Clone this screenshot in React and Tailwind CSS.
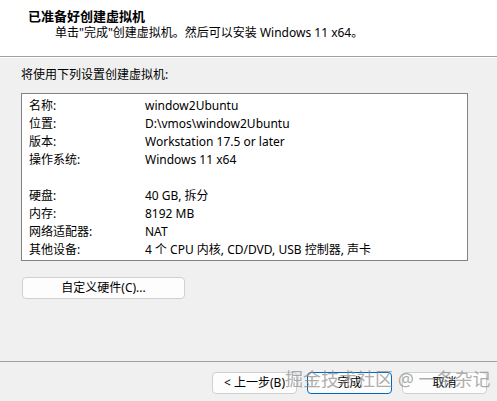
const rows = [
  { label: '名称:', value: 'window2Ubuntu' },
  { label: '位置:', value: 'D:\\vmos\\window2Ubuntu' },
  { label: '版本:', value: 'Workstation 17.5 or later' },
  { label: '操作系统:', value: 'Windows 11 x64' },
  null,
  { label: '硬盘:', value: '40 GB, 拆分' },
  { label: '内存:', value: '8192 MB' },
  { label: '网络适配器:', value: 'NAT' },
  { label: '其他设备:', value: '4 个 CPU 内核, CD/DVD, USB 控制器, 声卡' },
];

const font = { fontFamily: '"Noto Sans", "Noto Sans CJK SC", sans-serif' };

function Btn({ children, primary, className = '' }) {
  return (
    <button
      className={`h-[22px] rounded-[4px] bg-[#fdfdfd] text-[12px] leading-none text-black ${
        primary ? 'border border-[#0067c0]' : 'border border-[#d0d0d0]'
      } ${className}`}
    >
      {children}
    </button>
  );
}

export default function App() {
  return (
    <div className="relative flex h-[401px] w-[497px] flex-col overflow-hidden bg-[#f0f0f0] text-[12px] text-black" style={font}>
      {/* header */}
      <div className="h-[56px] shrink-0 bg-white pl-[28px] pt-[7px]">
        <div className="text-[13px] font-bold leading-[18px]">已准备好创建虚拟机</div>
        <div className="pl-[27px] text-[12px] leading-[16px]">单击"完成"创建虚拟机。然后可以安装 Windows 11 x64。</div>
      </div>
      <div className="h-px shrink-0 bg-[#a0a0a0]" />
      <div className="h-px shrink-0 bg-white" />

      <div className="flex-1 px-[21px] pt-[9px]">
        <div className="leading-[16px]">将使用下列设置创建虚拟机:</div>
        <div className="mt-[10px] h-[168px] w-[447px] border border-[#828282] bg-white pl-[7px] pt-[3px]">
          {rows.map((r, i) =>
            r ? (
              <div key={i} className="flex h-[18px] items-center">
                <span className="w-[116px]">{r.label}</span>
                <span>{r.value}</span>
              </div>
            ) : (
              <div key={i} className="h-[18px]" />
            )
          )}
        </div>
        <Btn className="mt-[16px] w-[163px] ml-px">自定义硬件(C)...</Btn>
      </div>

      {/* footer */}
      <div className="h-px shrink-0 bg-[#a0a0a0]" />
      <div className="flex h-[39px] shrink-0 items-start justify-end gap-[10px] pr-[10px] pt-[10px]">
        <Btn className="w-[85px]">&lt; 上一步(B)</Btn>
        <Btn primary className="w-[85px]">完成</Btn>
        <Btn className="w-[85px]">取消</Btn>
      </div>

      {/* watermark */}
      <div className="pointer-events-none absolute left-[285px] top-[368px] whitespace-nowrap text-[18px] leading-[22px] text-[#8a8a8a]/70" style={font}>
        掘金技术社区 @ 一条杂记
      </div>
    </div>
  );
}
